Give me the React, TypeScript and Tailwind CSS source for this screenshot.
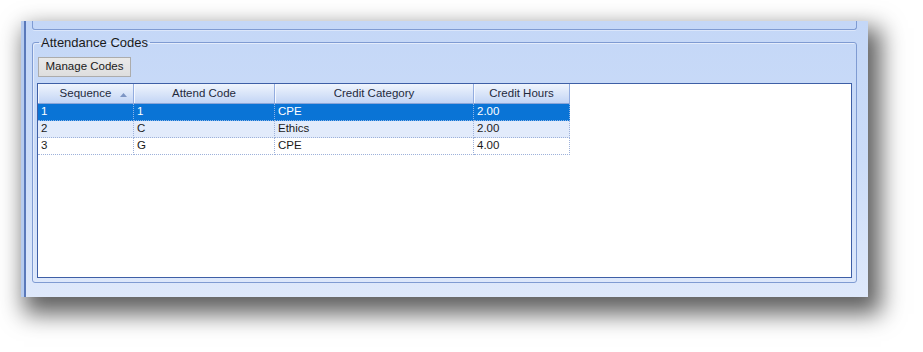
import React from "react";

const cols = [
  { label: "Sequence", w: "w-[96px]", sort: true },
  { label: "Attend Code", w: "w-[141px]" },
  { label: "Credit Category", w: "w-[199px]" },
  { label: "Credit Hours", w: "w-[96px]" },
];

const rows = [
  ["1", "1", "CPE", "2.00"],
  ["2", "C", "Ethics", "2.00"],
  ["3", "G", "CPE", "4.00"],
];

export default function App() {
  return (
    <div
      className="w-[923px] h-[352px] bg-white pl-[21px] pt-[21px] overflow-hidden"
      style={{ fontFamily: '"Liberation Sans", Arial, sans-serif' }}
    >
      <div className="flex w-[847px] h-[276px] bg-gradient-to-b from-[#c4d7f7] via-[#cbdcf8] to-[#dfe9fb] shadow-[8px_12px_22px_5px_rgba(0,0,0,0.62)]">
        <div className="w-[3px] bg-[#b6cbee]" />
        <div className="w-[2px] bg-[#5a79ba]" />
        <div className="flex-1 flex flex-col pl-[6px] pr-[11px]">
          <div className="h-[9px] border-l border-r border-b border-[#7f9bd2] rounded-b-[3px] shadow-[0_1px_0_#dbe6fa]" />
          <fieldset className="mt-[5px] h-[248px] border border-[#7f9bd2] rounded-[3px] px-[4px] pb-[4px] shadow-[inset_1px_1px_0_#e4ecfb]">
            <legend className="ml-[2px] px-[2px] text-[13px] leading-[15px] text-[#1a1a1a]">
              Attendance Codes
            </legend>
            <div className="pt-[3px] pl-[1px]">
              <button className="h-[20px] w-[93px] bg-gradient-to-b from-[#e9e9e9] to-[#dedede] border border-[#acacac] text-[11.5px] text-[#1a1a1a] leading-none">
                Manage Codes
              </button>
            </div>
            <div className="mt-[6px] h-[195px] border border-[#3e5fa6] bg-white">
              <div className="flex w-fit h-[20px] border-b border-[#8aa5d8]">
                {cols.map((c, i) => (
                  <div
                    key={i}
                    className={`${c.w} relative flex items-center justify-center bg-gradient-to-b from-[#f0f5fd] to-[#c3d5f5] border-r border-[#92acdf] shadow-[inset_1px_0_0_#f5f8fe] text-[11.5px] text-[#1f2a3d]`}
                  >
                    {c.label}
                    {c.sort && (
                      <svg
                        className="absolute right-[6px] top-[9px]"
                        width="7"
                        height="4"
                        viewBox="0 0 7 4"
                      >
                        <polygon points="0,4 7,4 3.5,0" fill="#7d95c4" />
                      </svg>
                    )}
                  </div>
                ))}
              </div>
              {rows.map((r, ri) => {
                const sel = ri === 0;
                const bg = sel ? "bg-[#0a74d6] text-white" : ri === 1 ? "bg-[#e2ebfb] text-[#1a1a1a]" : "bg-white text-[#1a1a1a]";
                return (
                  <div key={ri} className={`flex w-fit h-[17px] ${bg}`}>
                    {r.map((v, ci) => (
                      <div
                        key={ci}
                        className={`${cols[ci].w} flex items-center pl-[3px] text-[11.5px] border-r border-b border-dotted ${sel ? "border-[#8fb4e6]" : "border-[#9db1da]"}`}
                      >
                        {v}
                      </div>
                    ))}
                  </div>
                );
              })}
            </div>
          </fieldset>
        </div>
      </div>
    </div>
  );
}
